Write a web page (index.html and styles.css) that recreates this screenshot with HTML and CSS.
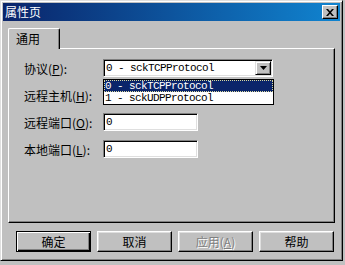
FILE: index.html
```html
<!DOCTYPE html>
<html lang="zh-CN">
<head>
    <meta charset="UTF-8">
    <title>属性页</title>
    <link rel="stylesheet" href="styles.css">
</head>
<body>
    <div class="window">
        <div class="titlebar">
            <span class="title">属性页</span>
            <span class="close-btn">
                <svg width="8" height="7" viewBox="0 0 8 7"><path d="M0 0h2l2 2.2L6 0h2L5 3.5 8 7H6L4 4.8 2 7H0l3-3.5z" fill="#000"/></svg>
            </span>
        </div>

        <div class="content">
            <div class="tabs">
                <div class="tab active">通用</div>
            </div>

            <div class="panel">
                <div class="row">
                    <span class="label">协议(<u>P</u>):</span>
                    <div class="field combo">
                        <span class="combo-value">0 - sckTCPProtocol</span>
                        <span class="combo-btn">
                            <svg width="7" height="4" viewBox="0 0 7 4"><path d="M0 0h7L3.5 4z" fill="#000"/></svg>
                        </span>
                        <ul class="combo-list">
                            <li class="selected">0 - sckTCPProtocol</li>
                            <li>1 - sckUDPProtocol</li>
                        </ul>
                    </div>
                </div>
                <div class="row">
                    <span class="label">远程主机(<u>H</u>):</span>
                    <div class="field wide"></div>
                </div>
                <div class="row">
                    <span class="label">远程端口(<u>O</u>):</span>
                    <div class="field">0</div>
                </div>
                <div class="row">
                    <span class="label">本地端口(<u>L</u>):</span>
                    <div class="field">0</div>
                </div>
            </div>

            <div class="button-row">
                <button class="btn default">确定</button>
                <button class="btn">取消</button>
                <button class="btn disabled">应用(<u>A</u>)</button>
                <button class="btn">帮助</button>
            </div>
        </div>
    </div>
</body>
</html>
```

FILE: styles.css
```css
* {
    margin: 0;
    padding: 0;
    box-sizing: border-box;
}

body {
    background: #c0c0c0;
    font-family: "Noto Sans CJK SC", sans-serif;
    font-size: 12px;
    color: #000;
}

.window {
    width: 343px;
    height: 261px;
    background: #c0c0c0;
    border: 1px solid;
    border-color: #dfdfdf #000 #000 #dfdfdf;
    box-shadow: inset 1px 1px #fff, inset -1px -1px #808080;
    padding: 2px;
    display: flex;
    flex-direction: column;
}

.titlebar {
    height: 18px;
    background: linear-gradient(to right, #0a246a, #1084d0);
    color: #fff;
    display: flex;
    align-items: center;
    justify-content: space-between;
    padding: 0 2px;
}

.title {
    line-height: 1;
}

.close-btn {
    width: 16px;
    height: 14px;
    background: #c0c0c0;
    border: 1px solid;
    border-color: #fff #000 #000 #fff;
    box-shadow: inset -1px -1px #808080;
    display: flex;
    align-items: center;
    justify-content: center;
}

.content {
    flex: 1;
    display: flex;
    flex-direction: column;
    padding: 7px 5px 0 5px;
}

.tabs {
    display: flex;
    height: 20px;
}

.tab {
    width: 52px;
    height: 21px;
    background: #c0c0c0;
    border: 1px solid;
    border-color: #fff #000 transparent #fff;
    border-bottom: none;
    border-radius: 2px 2px 0 0;
    box-shadow: inset -1px 0 #808080;
    padding-left: 7px;
    line-height: 19px;
    position: relative;
    z-index: 1;
}

.panel {
    height: 175px;
    border: 1px solid;
    border-color: #fff #000 #000 #fff;
    box-shadow: inset -1px -1px #808080;
    padding: 10px 0 0 15px;
    display: flex;
    flex-direction: column;
    gap: 9px;
}

.row {
    display: flex;
    align-items: center;
    height: 18px;
}

.label {
    width: 79px;
    white-space: nowrap;
}

.field {
    width: 95px;
    height: 18px;
    background: #fff;
    border: 1px solid;
    border-color: #808080 #fff #fff #808080;
    box-shadow: inset 1px 1px #000, inset -1px -1px #dfdfdf;
    padding: 1px 2px;
    font-family: "Liberation Mono", monospace;
    font-size: 11px;
    letter-spacing: -0.6px;
    line-height: 14px;
}

.field.wide {
    width: 170px;
}

.combo {
    width: 170px;
    display: flex;
    align-items: center;
    position: relative;
    padding: 1px 1px 1px 2px;
}

.combo-value {
    flex: 1;
}

.combo-btn {
    width: 16px;
    height: 14px;
    background: #c0c0c0;
    border: 1px solid;
    border-color: #dfdfdf #000 #000 #dfdfdf;
    box-shadow: inset 1px 1px #fff, inset -1px -1px #808080;
    display: flex;
    align-items: center;
    justify-content: center;
}

.combo-list {
    position: absolute;
    top: 19px;
    left: -1px;
    width: 171px;
    list-style: none;
    background: #fff;
    border: 1px solid #000;
    z-index: 2;
}

.combo-list li {
    height: 12px;
    line-height: 12px;
    padding-left: 1px;
}

.combo-list li.selected {
    background: #0a246a;
    color: #fff;
    outline: 1px dotted #d8d8a0;
    outline-offset: -1px;
}

.button-row {
    display: flex;
    justify-content: flex-end;
    gap: 6px;
    margin-top: 8px;
    padding-right: 1px;
}

.btn {
    width: 75px;
    height: 21px;
    background: #c0c0c0;
    border: 1px solid;
    border-color: #fff #000 #000 #fff;
    box-shadow: inset -1px -1px #808080, inset 1px 1px #dfdfdf;
    font-family: "Noto Sans CJK SC", sans-serif;
    font-size: 12px;
    line-height: 1;
    color: #000;
}

.btn.default {
    border-color: #000;
    box-shadow: inset 1px 1px #fff, inset -1px -1px #000, inset -2px -2px #808080;
}

.btn.disabled {
    color: #808080;
    text-shadow: 1px 1px #fff;
}
```
